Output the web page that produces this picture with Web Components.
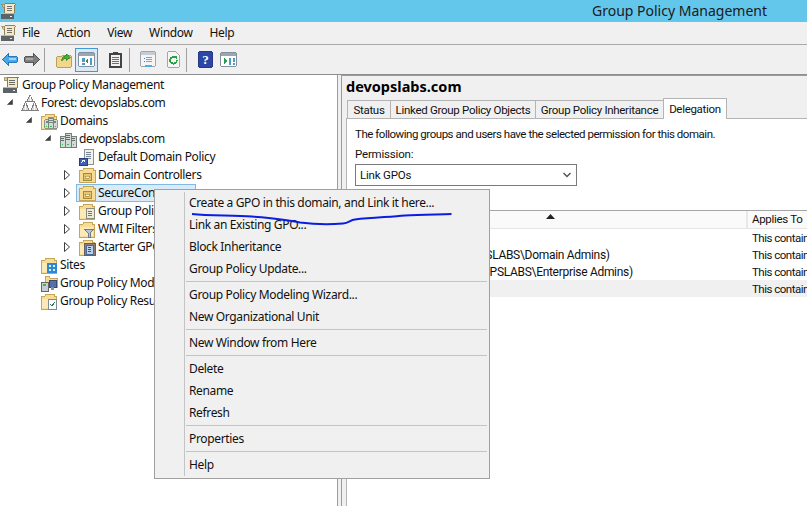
<!DOCTYPE html>
<html>
<head>
<meta charset="utf-8">
<title>Group Policy Management</title>
<style>
  html, body { margin: 0; padding: 0; }
  body {
    width: 807px; height: 506px; overflow: hidden; position: relative;
    font: 12px/16px "Noto Sans", sans-serif; letter-spacing: -0.35px; color: #111;
    display: flex; flex-direction: column; background: #f0f0f0;
  }
</style>
</head>
<body>
<gp-titlebar>Group Policy Management</gp-titlebar>
<gp-menubar></gp-menubar>
<gp-toolbar></gp-toolbar>
<gp-main>
  <gp-tree slot="tree"></gp-tree>
  <gp-details slot="details"></gp-details>
</gp-main>
<gp-context-menu></gp-context-menu>
<script>
'use strict';

const SCROLL = `<path d="M5 1h11v1l-1 1v8H5z" fill="#f5e9c6" stroke="#8a7a5a"/><path d="M2 1.500h3v3H3z" fill="#dcc893" stroke="#8a7a5a" stroke-width=".7"/><path d="M7 4h6M7 6h6M7 8h6" stroke="#6b6b6b"/><path d="M1 11h14v6H1z" fill="#5d6468"/><path d="M1 11h14v1H1z" fill="#b4b9bc"/><path d="M11 14h2v1h-2z" fill="#eee"/>`;
const FOLDER = `<path d="M1 4h4l1-2h8v2h2v13H1z" fill="#f6dc97" stroke="#c4a55a"/><path d="M2 7h13v9H2z" fill="#fbeab8"/>`;
const SERVERS = `<path d="M1 6h5v11H1zM6 3h6v14H6zM12 6h5v11h-5z" fill="#d5dad6" stroke="#71807a"/><path d="M2 8h3M7 5h4M7 7h4M13 8h3M2 10h3M13 10h3M7 9h4" stroke="#5e6f68"/><path d="M3 14h1v1H3zM8 14h2v1H8zM14 14h1v1h-1z" fill="#2fc24a"/>`;
const OU = `<path d="M1 4h4l1-2h9v2h2v12H1z" fill="#f6dc97" stroke="#c4a55a"/><path d="M5 7h8v7H5z" fill="#e8c468" stroke="#a38a3c"/><path d="M7 10h4v2H7z" fill="#fff8d8" stroke="#86702c" stroke-width=".5"/>`;

const ICONS = {
  scroll: SCROLL,
  forest: `<path d="M9 1l3 6H6zM4.500 8l3.500 8H1zM13.500 8l3.500 8h-7z" fill="#d9d9d9" stroke="#7f7f7f"/><path d="M9 2v5M4.500 9v7M13.500 9v7" stroke="#fff"/>`,
  domains: FOLDER + `<g transform="translate(4 3) scale(.78)">${SERVERS}</g>`,
  domain: SERVERS,
  gpolink: `<path d="M6 1h9v15H6z" fill="#f4f1e6" stroke="#8f8f8f"/><path d="M8 4h5M8 6h5M8 8h5M9 10h4" stroke="#76869a"/><path d="M1 10h8v7H1z" fill="#3d5fb0" stroke="#26407f"/><path d="M3 15l3-3M4 12h2v2" stroke="#fff" fill="none"/>`,
  ou: OU,
  gpos: FOLDER + `<path d="M8 6h8v10H8z" fill="#eee9d8" stroke="#8c8c7c"/><path d="M10 9h4M10 11h4M10 13h4" stroke="#77776a"/>`,
  wmi: FOLDER + `<path d="M6 9h10l-4 4v4h-2v-4z" fill="#b8c4d0" stroke="#6d7b88"/>`,
  starter: FOLDER + `<path d="M6 5h11v12H6z" fill="#8c7f78" stroke="#6a5f5a"/><path d="M8 7h7v9H8z" fill="#bcd0ea" stroke="#4a6a98"/><path d="M10 9h3M10 11h3M10 13h3" stroke="#33527e"/>`,
  sites: FOLDER + `<path d="M7 7h10v10H7z" fill="#2c88d0"/><path d="M9 9h2v2H9zM13 9h2v2h-2zM9 13h2v2H9zM13 13h2v2h-2z" fill="#d8eefa"/>`,
  modeling: `<path d="M5 2h4l1 2h7v9H5z" fill="#f6dc97" stroke="#c4a55a"/><path d="M1 8h7v9H1z" fill="#c8ccd4" stroke="#666"/><path d="M9 6h7v7H9z" fill="#5a6ea8" stroke="#39486e"/><path d="M11 13h3v3h-3z" fill="#8a8a9a"/><path d="M3 10h3v2H3z" fill="#2fc24a"/>`,
  results: FOLDER + `<path d="M8 7h8v10H8z" fill="#fff" stroke="#808a94"/><path d="M10 12l2 2 3-4" stroke="#2a7a55" fill="none"/>`,
  back: `<path d="M1 9l7-6v3h9v6H8v3z" fill="#46a8ea" stroke="#1f6fb4"/><path d="M8 7h8v2H8z" fill="#9bd5f8"/>`,
  forward: `<path d="M17 9l-7-6v3H1v6h9v3z" fill="#7e7e7e" stroke="#4e4e4e"/><path d="M2 7h8v2H2z" fill="#aaa"/>`,
  up: `<path d="M1 6h5l1-1h9v12H1z" fill="#f2d68c" stroke="#b89a50"/><path d="M6 11c0-4 2-6 5-6V3l4 4-4 3V8c-2 0-4 1-5 3z" fill="#46b030" stroke="#2a7a1c" stroke-width=".7"/>`,
  pane: `<path d="M1 2h16v14H1z" fill="#fff" stroke="#7d8a96"/><path d="M1 2h16v3H1z" fill="#9aa6b2"/><path d="M4 7h3v2H4zM4 10h3v2H4zM4 13h3v2H4zM13 7h2v8h-2z" fill="#4e9bc6"/><path d="M11 8v5l-3-2.500z" fill="#2e8f4c"/>`,
  clip: `<path d="M3 3h12v14H3z" fill="#f2f2f2" stroke="#444" stroke-width="1.500"/><path d="M6 1h6v3H6z" fill="#444"/><path d="M5 7h8M5 9h8M5 11h8M5 13h8" stroke="#666"/>`,
  props: `<path d="M1 1h15v15H1z" fill="#f5f5f5" stroke="#9aa0a6"/><path d="M1 1h15v3H1z" fill="#c8ccd0"/><path d="M4 7h1v1H4zM4 9h1v1H4zM4 11h1v1H4z" fill="#3a7ab8"/><path d="M6 7h7M6 9h7M6 11h7" stroke="#7a9ac0"/><path d="M5 15h8v2H5z" fill="#47b3e6"/>`,
  refresh: `<path d="M3 1h9l3 3v13H3z" fill="#f6f6f6" stroke="#a0a0a0"/><path d="M12.500 10a3.500 3.500 0 1 1-1.500-3" fill="none" stroke="#2aa040" stroke-width="2"/><path d="M9.500 5l3.500 .5-1 3.500z" fill="#2aa040"/>`,
  help: `<path d="M2 1h14v16H2z" fill="#2c46a8" stroke="#1c2f7c"/><text x="9" y="14" font-family="Liberation Serif" font-size="14" font-weight="700" text-anchor="middle" fill="#fff">?</text>`,
  action: `<path d="M1 2h16v14H1z" fill="#fff" stroke="#7d8a96"/><path d="M1 2h16v3H1z" fill="#9aa6b2"/><path d="M4 7v7l4-3.500z" fill="#2e9a50"/><path d="M10 7h2v8h-2z" fill="#4e9bc6"/><path d="M14 7h2v2h-2zM14 10h2v2h-2zM14 13h2v2h-2z" fill="#4e9bc6"/>`
};

class GpIcon extends HTMLElement {
  constructor() {
    super();
    const size = this.getAttribute('size') || 18;
    this.attachShadow({mode: 'open'}).innerHTML = `
      <style>
        :host { display: inline-flex; flex: none; width: ${size}px; height: ${size}px; }
        svg { display: block; }
      </style>
      <svg width="${size}" height="${size}" viewBox="0 0 18 18" shape-rendering="crispEdges">${ICONS[this.getAttribute('name')] || ''}</svg>`;
  }
}
customElements.define('gp-icon', GpIcon);

class GpTitlebar extends HTMLElement {
  constructor() {
    super();
    this.attachShadow({mode: 'open'}).innerHTML = `
      <style>
        :host {
          display: flex; align-items: center; justify-content: space-between; flex: none;
          height: 22px; background: #63c7ec; color: #1a1a1a; font-size: 14px; letter-spacing: 0;
        }
        .label { margin-right: 40px; }
      </style>
      <gp-icon name="scroll" size="17"></gp-icon>
      <span class="label"><slot></slot></span>`;
  }
}
customElements.define('gp-titlebar', GpTitlebar);

class GpMenubar extends HTMLElement {
  constructor() {
    super();
    const items = ['File', 'Action', 'View', 'Window', 'Help'];
    this.attachShadow({mode: 'open'}).innerHTML = `
      <style>
        :host {
          display: flex; align-items: center; flex: none; height: 22px;
          background: #f0f0f0; border-bottom: 1px solid #a9a9a9; box-sizing: content-box;
        }
        .bar { display: flex; margin-left: 5px; }
        span { margin-right: 17px; }
      </style>
      <gp-icon name="scroll" size="17"></gp-icon>
      <div class="bar">${items.map(i => `<span>${i}</span>`).join('')}</div>`;
  }
}
customElements.define('gp-menubar', GpMenubar);

class GpToolbar extends HTMLElement {
  constructor() {
    super();
    const btn = (name, w, cls) => `<div class="btn ${cls || ''}" style="width:${w}px"><gp-icon name="${name}" size="17"></gp-icon></div>`;
    this.attachShadow({mode: 'open'}).innerHTML = `
      <style>
        :host {
          display: flex; align-items: center; flex: none; height: 29px;
          background: #f0f0f0; border-bottom: 1px solid #8e8e8e;
        }
        .btn { display: flex; align-items: center; justify-content: center; height: 24px; box-sizing: border-box; flex: none; }
        .on { background: #d9e9f7; border: 1px solid #3f9bd8; }
        .sep { width: 1px; height: 24px; background: #a0a0a0; flex: none; }
      </style>
      ${btn('back', 18)}
      <div style="width:5px"></div>
      ${btn('forward', 18)}
      <div style="width:3px"></div>
      <div class="sep"></div>
      <div style="width:10px"></div>
      ${btn('up', 19)}
      <div style="width:1px"></div>
      ${btn('pane', 23, 'on')}
      <div style="width:9px"></div>
      ${btn('clip', 17)}
      <div style="width:4px"></div>
      <div class="sep" style="margin-left:1px"></div>
      <div style="width:10px"></div>
      ${btn('props', 17)}
      <div style="width:8px"></div>
      ${btn('refresh', 17)}
      <div style="width:4px"></div>
      <div class="sep"></div>
      <div style="width:10px"></div>
      ${btn('help', 17)}
      <div style="width:5px"></div>
      ${btn('action', 18)}`;
  }
}
customElements.define('gp-toolbar', GpToolbar);

class GpMain extends HTMLElement {
  constructor() {
    super();
    this.attachShadow({mode: 'open'}).innerHTML = `
      <style>
        :host {
          display: grid; grid-template-columns: 338px 3px 1fr; flex: 1; min-height: 0;
        }
        .tree { border-right: 1px solid #9b9b9b; background: #fff; min-width: 0; box-sizing: content-box; }
        .split { background: #f0f0f0; }
        .details { border-left: 1px solid #9b9b9b; border-top: 1px solid #9b9b9b; min-width: 0; overflow: hidden; }
      </style>
      <div class="tree"><slot name="tree"></slot></div>
      <div class="split"></div>
      <div class="details"><slot name="details"></slot></div>`;
  }
}
customElements.define('gp-main', GpMain);

class GpTreeItem extends HTMLElement {
  constructor() {
    super();
    const level = +this.getAttribute('level') || 0;
    const toggle = this.getAttribute('toggle');
    const selected = this.hasAttribute('selected');
    let arrow = '';
    if (toggle === 'open') arrow = '<path d="M6.500 1.500v5h-5z" fill="#404040" stroke="#404040" stroke-width=".6"/>';
    if (toggle === 'closed') arrow = '<path d="M1.500 .5l5 4.500-5 4.500z" fill="#fff" stroke="#404040"/>';
    this.attachShadow({mode: 'open'}).innerHTML = `
      <style>
        :host { display: flex; align-items: center; height: 18px; white-space: nowrap; }
        .indent { display: flex; justify-content: flex-end; flex: none; box-sizing: border-box; width: ${2 + 19 * level}px; }
        .indent svg { margin-right: 7px; }
        svg { display: block; }
        .label { display: flex; align-items: center; height: 18px; box-sizing: border-box; }
        .sel { background: #d9ebf9; outline: 1px solid #7fb9e4; outline-offset: -1px; margin-left: -2px; padding-left: 2px; width: 120px; }
        .text { margin-left: 2px; }
      </style>
      <div class="indent">${arrow ? `<svg width="8" height="10" viewBox="0 0 8 10">${arrow}</svg>` : ''}</div>
      <div class="label ${selected ? 'sel' : ''}">
        <gp-icon name="${this.getAttribute('icon')}" size="18"></gp-icon>
        <span class="text"><slot></slot></span>
      </div>`;
  }
}
customElements.define('gp-tree-item', GpTreeItem);

class GpTree extends HTMLElement {
  constructor() {
    super();
    this.attachShadow({mode: 'open'}).innerHTML = `
      <style>
        :host { display: flex; flex-direction: column; padding-top: 1px; background: #fff; height: 100%; box-sizing: border-box; }
      </style>
      <slot></slot>`;
    const rows = [
      [0, '', 'scroll', 'Group Policy Management'],
      [1, 'open', 'forest', 'Forest: devopslabs.com'],
      [2, 'open', 'domains', 'Domains'],
      [3, 'open', 'domain', 'devopslabs.com'],
      [4, '', 'gpolink', 'Default Domain Policy'],
      [4, 'closed', 'ou', 'Domain Controllers'],
      [4, 'closed', 'ou', 'SecureCon', true],
      [4, 'closed', 'gpos', 'Group Policy Objects'],
      [4, 'closed', 'wmi', 'WMI Filters'],
      [4, 'closed', 'starter', 'Starter GPOs'],
      [2, '', 'sites', 'Sites'],
      [2, '', 'modeling', 'Group Policy Modeling'],
      [2, '', 'results', 'Group Policy Results']
    ];
    for (const [level, toggle, icon, label, selected] of rows) {
      const item = document.createElement('template');
      item.innerHTML = `<gp-tree-item level="${level}" toggle="${toggle}" icon="${icon}" ${selected ? 'selected' : ''}>${label}</gp-tree-item>`;
      this.appendChild(item.content);
    }
  }
}
customElements.define('gp-tree', GpTree);

class GpTabs extends HTMLElement {
  constructor() {
    super();
    const tabs = [['Status', 43], ['Linked Group Policy Objects', 145], ['Group Policy Inheritance', 128], ['Delegation', 63, true]];
    this.attachShadow({mode: 'open'}).innerHTML = `
      <style>
        :host { display: flex; align-items: flex-end; height: 21px; padding-left: 1px; position: relative; z-index: 1; font: 11.500px/16px Roboto, sans-serif; letter-spacing: -.3px; }
        div {
          height: 18px; box-sizing: border-box; border: 1px solid #b4b4b4; border-bottom: 0; margin-right: -1px;
          display: flex; align-items: center; justify-content: center; white-space: nowrap;
          background: #f0f0f0;
        }
        .on { background: #fff; margin-bottom: -1px; height: 21px; }
      </style>
      ${tabs.map(([t, w, on]) => `<div class="${on ? 'on' : ''}" style="width:${w + 1}px">${t}</div>`).join('')}`;
  }
}
customElements.define('gp-tabs', GpTabs);

class GpSelect extends HTMLElement {
  constructor() {
    super();
    this.attachShadow({mode: 'open'}).innerHTML = `
      <style>
        :host {
          display: flex; align-items: center; justify-content: space-between;
          width: 222px; height: 22px; box-sizing: border-box; background: #fff;
          border: 1px solid #7a7a7a; padding: 0 4px 0 4px;
        }
        svg { display: block; }
      </style>
      <span><slot></slot></span>
      <svg width="10" height="6" viewBox="0 0 10 6"><path d="M1.500 1l3.500 3.500L8.500 1" fill="none" stroke="#555" stroke-width="1.500"/></svg>`;
  }
}
customElements.define('gp-select', GpSelect);

class GpPermTable extends HTMLElement {
  constructor() {
    super();
    const rows = [
      ['', 'This contain', ''],
      ['Domain Admins (DEVOPSLABS\\Domain Admins)', 'This contain', ''],
      ['Enterprise Admins (DEVOPSLABS\\Enterprise Admins)', 'This contain', ''],
      ['', 'This contain', 'alt']
    ];
    this.attachShadow({mode: 'open'}).innerHTML = `
      <style>
        :host { display: block; border-top: 1px solid #a5a5a5; margin-left: -9px; white-space: nowrap; font: 12px/16px Roboto, sans-serif; letter-spacing: -.3px; }
        .row, .head { display: grid; grid-template-columns: 400px 1fr; }
        .head { height: 17px; background: #fafafa; border-bottom: 1px solid #e5e5e5; box-sizing: content-box; }
        .head .c1 { padding: 3px 0 0 200px; box-sizing: border-box; }
        .head .c2 { border-left: 2px solid #e8e8e8; padding-left: 4px; overflow: hidden; font-size: 11.500px; letter-spacing: -.3px; }
        svg { display: block; }
        .row { height: 17px; align-items: center; }
        .alt { background: #f0f0f0; }
        .c1 { overflow: hidden; padding-left: 15px; box-sizing: border-box; }
        .c2 { padding-left: 6px; overflow: hidden; font-size: 11.500px; letter-spacing: -.5px; }
      </style>
      <div class="head">
        <div class="c1"><svg width="9" height="5" viewBox="0 0 9 5"><path d="M4.500 0L9 5H0z" fill="#222"/></svg></div>
        <div class="c2">Applies To</div>
      </div>
      ${rows.map(([n, a, c]) => `<div class="row ${c}"><div class="c1">${n}</div><div class="c2">${a}</div></div>`).join('')}`;
  }
}
customElements.define('gp-perm-table', GpPermTable);

class GpDetails extends HTMLElement {
  constructor() {
    super();
    this.attachShadow({mode: 'open'}).innerHTML = `
      <style>
        :host { display: flex; flex-direction: column; height: 100%; background: #f0f0f0; box-sizing: border-box; padding-left: 4px; }
        h1 { margin: 0; font-size: 14.500px; line-height: 20px; height: 21px; font-weight: 700; letter-spacing: 0; color: #000; }
        .page {
          flex: 1; background: #fff; border-left: 1px solid #b4b4b4; border-top: 1px solid #b4b4b4;
          padding: 7px 0 0 8px; display: flex; flex-direction: column; min-width: 0;
          font: 11.500px/16px Roboto, sans-serif; letter-spacing: -.47px;
        }
        .perm { margin-top: 4px; margin-bottom: 2px; letter-spacing: -.2px; }
        gp-select { letter-spacing: -.2px; }
        gp-perm-table { margin-top: 24px; }
        .intro { white-space: nowrap; }
      </style>
      <h1>devopslabs.com</h1>
      <gp-tabs></gp-tabs>
      <div class="page">
        <div class="intro">The following groups and users have the selected permission for this domain.</div>
        <div class="perm">Permission:</div>
        <gp-select>Link GPOs</gp-select>
        <gp-perm-table></gp-perm-table>
      </div>`;
  }
}
customElements.define('gp-details', GpDetails);

class GpContextMenu extends HTMLElement {
  constructor() {
    super();
    const groups = [
      ['Create a GPO in this domain, and Link it here...', 'Link an Existing GPO...', 'Block Inheritance', 'Group Policy Update...'],
      ['Group Policy Modeling Wizard...', 'New Organizational Unit'],
      ['New Window from Here'],
      ['Delete', 'Rename', 'Refresh'],
      ['Properties'],
      ['Help']
    ];
    this.attachShadow({mode: 'open'}).innerHTML = `
      <style>
        :host {
          display: block; position: absolute; left: 154px; top: 189px; width: 336px; height: 290px;
          box-sizing: border-box; background: #f0f0f0; border: 1px solid #a0a0a0; padding: 2px; z-index: 5;
        }
        .list { border-left: 1px solid #c4c4c4; margin-left: 27px; height: 100%; }
        .item { height: 22px; line-height: 22px; padding-left: 4px; white-space: nowrap; }
        .sep { height: 1px; margin: 1px 0 2px 1px; background: #c4c4c4; }
        svg { position: absolute; left: 0; top: 0; overflow: visible; pointer-events: none; }
      </style>
      <div class="list">
        ${groups.map(g => g.map(i => `<div class="item">${i}</div>`).join('')).join('<div class="sep"></div>')}
      </div>
      <svg width="334" height="288" viewBox="155 190 334 288"><path d="M192 214C210 216 232 215 252 216.500C272 218 285 219 300 222.500C315 224.500 332 224.500 343 223.500C349 223 350 220 355 219.500C372 217.500 390 217 405 215.500C420 214.500 438 214.500 451.500 214" fill="none" stroke="#0b1ee0" stroke-width="2"/></svg>`;
  }
}
customElements.define('gp-context-menu', GpContextMenu);
</script>
</body>
</html>
